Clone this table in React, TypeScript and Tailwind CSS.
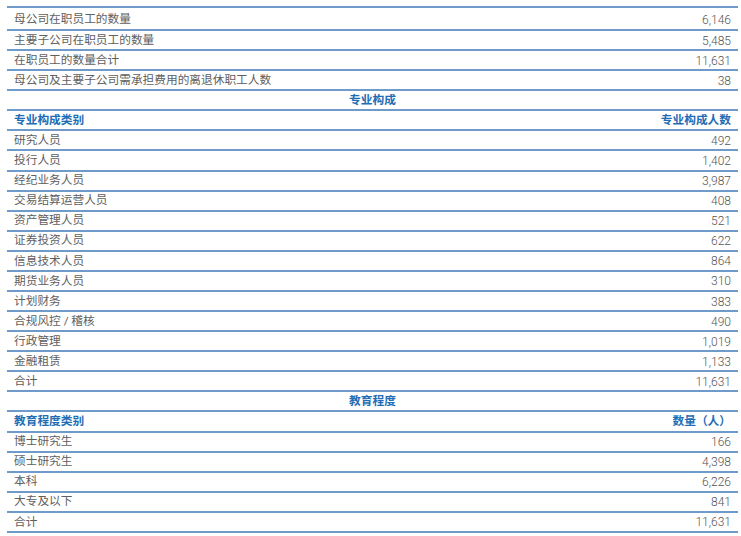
import React from 'react';

type Row = { label: string; value: string };

// 在职员工概况
const summaryRows: Row[] = [
  { label: '母公司在职员工的数量', value: '6,146' },
  { label: '主要子公司在职员工的数量', value: '5,485' },
  { label: '在职员工的数量合计', value: '11,631' },
  { label: '母公司及主要子公司需承担费用的离退休职工人数', value: '38' },
];

const majorRows: Row[] = [
  { label: '研究人员', value: '492' },
  { label: '投行人员', value: '1,402' },
  { label: '经纪业务人员', value: '3,987' },
  { label: '交易结算运营人员', value: '408' },
  { label: '资产管理人员', value: '521' },
  { label: '证券投资人员', value: '622' },
  { label: '信息技术人员', value: '864' },
  { label: '期货业务人员', value: '310' },
  { label: '计划财务', value: '383' },
  { label: '合规风控 / 稽核', value: '490' },
  { label: '行政管理', value: '1,019' },
  { label: '金融租赁', value: '1,133' },
  { label: '合计', value: '11,631' },
];

const eduRows: Row[] = [
  { label: '博士研究生', value: '166' },
  { label: '硕士研究生', value: '4,398' },
  { label: '本科', value: '6,226' },
  { label: '大专及以下', value: '841' },
  { label: '合计', value: '11,631' },
];

const DataRow: React.FC<{ row: Row; tall?: boolean }> = ({ row, tall }) => (
  <div
    className={`flex items-center justify-between px-[7px] border-b-2 border-[#6f9bcb] text-[#606060] ${
      tall ? 'h-[23px] pt-[2px]' : 'h-[20.08px] pt-[1px]'
    }`}
  >
    <span>{row.label}</span>
    <span className="font-light text-[#555] text-[12px]">{row.value}</span>
  </div>
);

const SectionTitle: React.FC<{ title: string }> = ({ title }) => (
  <div className="flex items-center justify-center h-[20.08px] pt-[1px] border-b-2 border-[#6f9bcb] font-bold text-[#1f6db5]">
    {title}
  </div>
);

const HeaderRow: React.FC<{ left: string; right: string }> = ({ left, right }) => (
  <div className="flex items-center justify-between px-[7px] h-[20.08px] pt-[1px] border-b-2 border-[#6f9bcb] font-bold text-[#1f6db5]">
    <span>{left}</span>
    <span>{right}</span>
  </div>
);

export default function App() {
  return (
    <div
      className="w-[741px] h-[536px] bg-white pt-[6px] pl-[7px] pr-[3px]"
      style={{ fontFamily: 'Roboto, "Noto Sans CJK SC", sans-serif' }}
    >
      <div className="border-t-2 border-[#6f9bcb] text-[11.7px] leading-none">
        {summaryRows.map((r, i) => (
          <DataRow key={r.label} row={r} tall={i === 0} />
        ))}

        {/* 专业构成 */}
        <SectionTitle title="专业构成" />
        <HeaderRow left="专业构成类别" right="专业构成人数" />
        {majorRows.map((r) => (
          <DataRow key={r.label} row={r} />
        ))}

        {/* 教育程度 */}
        <SectionTitle title="教育程度" />
        <HeaderRow left="教育程度类别" right="数量（人）" />
        {eduRows.map((r) => (
          <DataRow key={r.label} row={r} />
        ))}
      </div>
    </div>
  );
}
